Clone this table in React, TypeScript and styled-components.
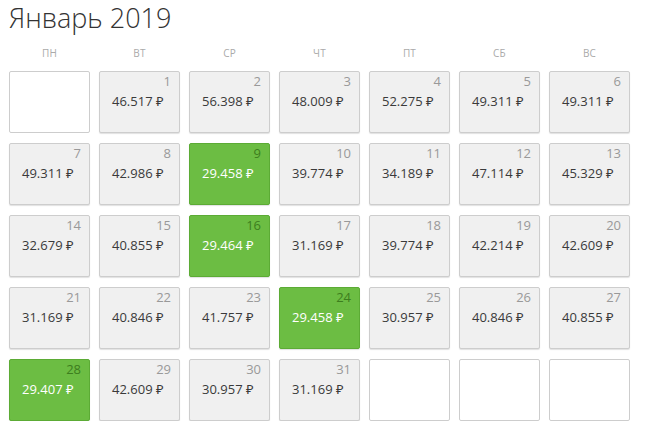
import React from "react";
import styled, { createGlobalStyle } from "styled-components";

const Global = createGlobalStyle`
  html, body { margin: 0; padding: 0; background: #fff; }
  body { font-family: "Open Sans", "Noto Sans", sans-serif; }
`;

const Page = styled.div`
  padding: 0 0 0 9px;
  width: 621px;
`;

const Title = styled.h1`
  margin: 0;
  font-family: "Open Sans", sans-serif;
  font-weight: 300;
  font-size: 27px;
  line-height: 35px;
  color: #333;
`;

const Grid = styled.div`
  display: grid;
  grid-template-columns: repeat(7, 81px);
  column-gap: 9px;
`;

const HeadRow = styled(Grid)`
  margin-top: 11px;
`;

const Head = styled.div`
  text-align: center;
  font-size: 10px;
  line-height: 14px;
  color: #aaa;
  text-transform: uppercase;
  letter-spacing: 0.2px;
`;

const Days = styled(Grid)`
  margin-top: 11px;
  grid-auto-rows: 62px;
  row-gap: 10px;
`;

const Cell = styled.div<{ $kind: "empty" | "normal" | "best" }>`
  box-sizing: border-box;
  border-radius: 2px;
  border: 1px solid
    ${(p) => (p.$kind === "best" ? "#5cab35" : "#cdcdcd")};
  background: ${(p) =>
    p.$kind === "best" ? "#6cbd43" : p.$kind === "empty" ? "#fff" : "#f0f0f0"};
  box-shadow: ${(p) =>
    p.$kind === "empty" ? "none" : "0 1px 1px rgba(0,0,0,0.12)"};
  display: flex;
  flex-direction: column;
  padding: 1px 8px 0 12px;
`;

const DayNum = styled.div<{ $best: boolean }>`
  text-align: right;
  font-size: 13px;
  line-height: 16px;
  color: ${(p) => (p.$best ? "#3d7e1e" : "#999")};
`;

const Price = styled.div<{ $best: boolean }>`
  margin-top: 4px;
  font-size: 13px;
  line-height: 16px;
  color: ${(p) => (p.$best ? "#fff" : "#3a3a3a")};
  white-space: nowrap;
`;

const heads = ["пн", "вт", "ср", "чт", "пт", "сб", "вс"];

type Day = { d: number; p: string; best?: boolean } | null;

const days: Day[] = [
  null,
  { d: 1, p: "46.517" },
  { d: 2, p: "56.398" },
  { d: 3, p: "48.009" },
  { d: 4, p: "52.275" },
  { d: 5, p: "49.311" },
  { d: 6, p: "49.311" },
  { d: 7, p: "49.311" },
  { d: 8, p: "42.986" },
  { d: 9, p: "29.458", best: true },
  { d: 10, p: "39.774" },
  { d: 11, p: "34.189" },
  { d: 12, p: "47.114" },
  { d: 13, p: "45.329" },
  { d: 14, p: "32.679" },
  { d: 15, p: "40.855" },
  { d: 16, p: "29.464", best: true },
  { d: 17, p: "31.169" },
  { d: 18, p: "39.774" },
  { d: 19, p: "42.214" },
  { d: 20, p: "42.609" },
  { d: 21, p: "31.169" },
  { d: 22, p: "40.846" },
  { d: 23, p: "41.757" },
  { d: 24, p: "29.458", best: true },
  { d: 25, p: "30.957" },
  { d: 26, p: "40.846" },
  { d: 27, p: "40.855" },
  { d: 28, p: "29.407", best: true },
  { d: 29, p: "42.609" },
  { d: 30, p: "30.957" },
  { d: 31, p: "31.169" },
  null,
  null,
  null,
];

export default function App() {
  return (
    <>
      <Global />
      <Page>
        <Title>Январь 2019</Title>
        <HeadRow>
          {heads.map((h) => (
            <Head key={h}>{h}</Head>
          ))}
        </HeadRow>
        <Days>
          {days.map((day, i) =>
            day ? (
              <Cell key={i} $kind={day.best ? "best" : "normal"}>
                <DayNum $best={!!day.best}>{day.d}</DayNum>
                <Price $best={!!day.best}>{day.p} ₽</Price>
              </Cell>
            ) : (
              <Cell key={i} $kind="empty" />
            )
          )}
        </Days>
      </Page>
    </>
  );
}
